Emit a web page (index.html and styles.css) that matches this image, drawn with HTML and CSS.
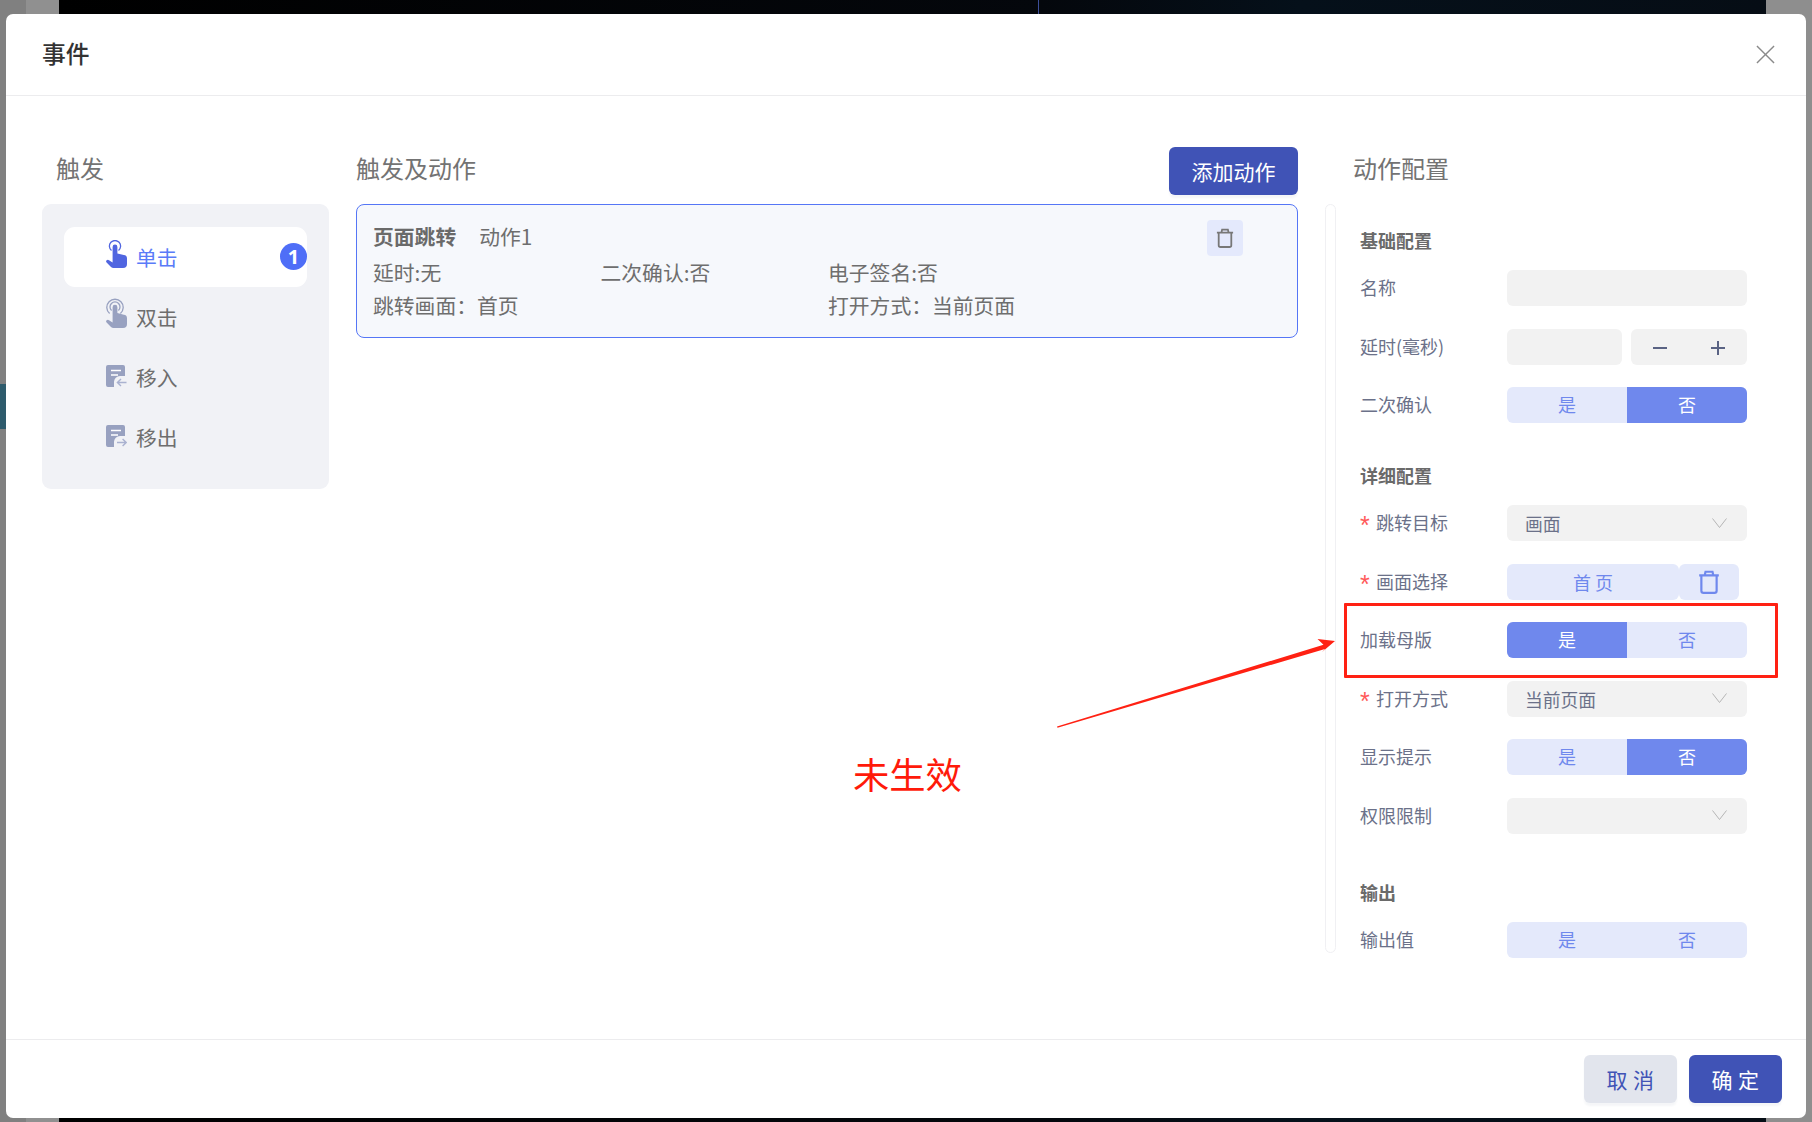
FILE: index.html
```html
<!DOCTYPE html>
<html lang="zh-CN">
<head>
<meta charset="utf-8">
<title>事件</title>
<link rel="stylesheet" href="styles.css">
</head>
<body>
<svg class="defs" width="0" height="0" aria-hidden="true">
  <defs>
    <symbol id="hand" viewBox="0 0 21 28">
      <path d="M5.500 10.500a5.600 5.600 0 1 1 7 0" fill="none" stroke="currentColor" stroke-width="1.300"/>
      <path fill="currentColor" d="M6.600 7a2.400 2.400 0 0 1 4.800 0V13.500l6.400 1.400a3.600 3.600 0 0 1 3.200 3.600V24a4 4 0 0 1-4 4H7.500a3.400 3.400 0 0 1-2.500-1.100L.6 22.600a1.700 1.700 0 0 1 2.400-2.400l3.600 2.200Z"/>
    </symbol>
    <symbol id="hand2" viewBox="0 0 21 30">
      <path d="M3.600 15.600a8.200 8.200 0 1 1 10.800 0" fill="none" stroke="currentColor" stroke-width="1.300"/>
      <path d="M5.600 12.600a5 5 0 1 1 6.800 0" fill="none" stroke="currentColor" stroke-width="1.300"/>
      <path fill="currentColor" d="M6.600 9.200a2.400 2.400 0 0 1 4.800 0V15l6.400 1.700a3.600 3.600 0 0 1 3.200 3.600V26a4 4 0 0 1-4 4H7.500a3.400 3.400 0 0 1-2.500-1.100L.6 24.600a1.700 1.700 0 0 1 2.400-2.400l3.600 2.200Z"/>
    </symbol>
    <symbol id="doc-in" viewBox="0 0 21 22">
      <path fill="currentColor" d="M2 0h15a2 2 0 0 1 2 2v9h-5a6 6 0 0 0-6 6v5H2a2 2 0 0 1-2-2V2a2 2 0 0 1 2-2Z"/>
      <path d="M5 5.500h10M5 10h7" stroke="#fff" stroke-width="1.600" fill="none"/>
      <path d="M20.500 17.500h-9M15 14l-3.600 3.500L15 21" stroke="#aab2d0" stroke-width="1.400" fill="none"/>
    </symbol>
    <symbol id="doc-out" viewBox="0 0 21 22">
      <path fill="currentColor" d="M2 0h15a2 2 0 0 1 2 2v9h-5a6 6 0 0 0-6 6v5H2a2 2 0 0 1-2-2V2a2 2 0 0 1 2-2Z"/>
      <path d="M5 5.500h10M5 10h7" stroke="#fff" stroke-width="1.600" fill="none"/>
      <path d="M11 17.500h9M16.600 14l3.600 3.500-3.600 3.500" stroke="#aab2d0" stroke-width="1.400" fill="none"/>
    </symbol>
    <symbol id="trash" viewBox="0 0 20 22">
      <path d="M1 5h18M6 5 6.800 1.600h6.400L14 5M3 5v14a2 2 0 0 0 2 2h10a2 2 0 0 0 2-2V5" fill="none" stroke="currentColor" stroke-width="2"/>
    </symbol>
    <symbol id="chevron" viewBox="0 0 15 10">
      <path d="M.5.5 7.500 9.500 14.500.5" fill="none" stroke="currentColor" stroke-width="1"/>
    </symbol>
  </defs>
</svg>

<div class="modal">
  <header class="modal-header">
    <h1 class="modal-title">事件</h1>
    <svg class="close-icon" viewBox="0 0 20 20"><path d="M1 1l18 18M19 1 1 19" fill="none" stroke="currentColor" stroke-width="1.500"/></svg>
  </header>

  <main class="modal-body">
    <section class="col">
      <div class="col-head"><h2 class="col-title col-title--trigger">触发</h2></div>
      <nav class="trigger-panel">
        <div class="trigger trigger--active">
          <svg class="trigger-icon trigger-icon--hand"><use href="#hand"/></svg>
          <span>单击</span>
          <span class="badge">1</span>
        </div>
        <div class="trigger">
          <svg class="trigger-icon trigger-icon--hand2"><use href="#hand2"/></svg>
          <span>双击</span>
        </div>
        <div class="trigger">
          <svg class="trigger-icon trigger-icon--doc"><use href="#doc-in"/></svg>
          <span>移入</span>
        </div>
        <div class="trigger">
          <svg class="trigger-icon trigger-icon--doc"><use href="#doc-out"/></svg>
          <span>移出</span>
        </div>
      </nav>
    </section>

    <section class="col">
      <div class="col-head col-head--split">
        <h2 class="col-title">触发及动作</h2>
        <button class="btn btn--primary btn--add">添加动作</button>
      </div>
      <article class="action-card">
        <div class="action-head">
          <strong class="action-type">页面跳转</strong>
          <span>动作1</span>
        </div>
        <div class="action-grid">
          <span>延时:无</span><span>二次确认:否</span><span>电子签名:否</span>
          <span>跳转画面：首页</span><span></span><span class="action-wide">打开方式：当前页面</span>
        </div>
        <div class="action-delete"><svg class="action-delete-icon"><use href="#trash"/></svg></div>
      </article>
    </section>

    <section class="col col--config">
      <div class="col-head"><h2 class="col-title col-title--config">动作配置</h2></div>
      <div class="config">
        <div class="rail"></div>
        <div class="form">
          <div class="group">
            <h3 class="group-title">基础配置</h3>
            <div class="field"><label class="field-label">名称</label><div class="input"></div></div>
            <div class="field"><label class="field-label">延时(毫秒)</label>
              <div class="delay">
                <div class="input input--delay"></div>
                <div class="stepper"><span class="step-minus"></span><span class="step-plus"></span></div>
              </div>
            </div>
            <div class="field"><label class="field-label">二次确认</label>
              <div class="toggle"><span class="seg">是</span><span class="seg seg--on">否</span></div>
            </div>
          </div>

          <div class="group group--detail">
            <h3 class="group-title">详细配置</h3>
            <div class="field"><label class="field-label"><i class="req">*</i>跳转目标</label>
              <div class="select"><span>画面</span><svg class="chevron"><use href="#chevron"/></svg></div>
            </div>
            <div class="field"><label class="field-label"><i class="req">*</i>画面选择</label>
              <div class="page-pick">
                <span class="page-name">首 页</span>
                <span class="page-del"><svg class="page-del-icon"><use href="#trash"/></svg></span>
              </div>
            </div>
            <div class="field"><label class="field-label">加载母版</label>
              <div class="toggle"><span class="seg seg--on">是</span><span class="seg">否</span></div>
            </div>
            <div class="field"><label class="field-label"><i class="req">*</i>打开方式</label>
              <div class="select"><span>当前页面</span><svg class="chevron"><use href="#chevron"/></svg></div>
            </div>
            <div class="field"><label class="field-label">显示提示</label>
              <div class="toggle"><span class="seg">是</span><span class="seg seg--on">否</span></div>
            </div>
            <div class="field"><label class="field-label">权限限制</label>
              <div class="select"><span></span><svg class="chevron"><use href="#chevron"/></svg></div>
            </div>
          </div>

          <div class="group group--output">
            <h3 class="group-title">输出</h3>
            <div class="field"><label class="field-label">输出值</label>
              <div class="toggle"><span class="seg">是</span><span class="seg">否</span></div>
            </div>
          </div>
        </div>
      </div>
    </section>
  </main>

  <footer class="modal-footer">
    <button class="btn btn--ghost btn--foot">取 消</button>
    <button class="btn btn--primary btn--foot">确 定</button>
  </footer>
</div>

<div class="mark-box"></div>
<svg class="mark-arrow" viewBox="0 0 1812 1122" aria-hidden="true">
  <path fill="#ff2113" d="M1057 726.600 1323.500 644.700 1317.500 639 1335 641 1321.500 652.500 1325 649 1057.500 727.800Z"/>
</svg>
<div class="mark-text">未生效</div>
</body>
</html>
```
FILE: styles.css
```css
* { box-sizing: border-box; }
html, body { margin: 0; width: 1812px; height: 1122px; overflow: hidden; }
body {
  font-family: "Noto Sans CJK SC", "Noto Sans", "Liberation Sans", sans-serif;
  background:
    linear-gradient(#2e5b6c, #2e5b6c) 0 384px / 6px 45px no-repeat,
    linear-gradient(#3d4f9a, #3d4f9a) 1038px 0 / 1px 14px no-repeat,
    linear-gradient(90deg, #808080 0, #808080 26px, #909090 26px, #909090 59px, #000 59px, #04070c 1040px, #05101a 1300px, #060d15 1766px, #8e8e8e 1766px);
  padding: 14px 6px 4px;
}
.defs { position: absolute; }

.modal {
  height: 1104px;
  background: #fff;
  border-radius: 7px;
  display: flex;
  flex-direction: column;
}
.modal-header {
  height: 82px;
  flex: none;
  border-bottom: 1px solid #ececee;
  padding: 0 31px 0 36px;
  display: flex;
  align-items: center;
  justify-content: space-between;
}
.modal-title { margin: 0 0 3px; font-size: 23.800px; font-weight: 500; color: #333; line-height: 32px; }
.close-icon { width: 19px; height: 19px; color: #8a8a8a; margin-bottom: 1px; }

.modal-body {
  flex: 1;
  display: grid;
  grid-template-columns: 287px 942px 1fr;
  column-gap: 27px;
  padding: 51px 0 0 36px;
}
.col-head { height: 48px; margin-bottom: 9px; display: flex; align-items: center; }
.col-head--split { justify-content: space-between; }
.col-title { margin: 0 0 7px; font-size: 24px; font-weight: 400; color: #737373; line-height: 40px; }
.col-title--trigger { padding-left: 14px; }
.col-title--config { padding-left: 28px; }

.trigger-panel {
  height: 285px;
  background: #f1f2f6;
  border-radius: 9px;
  padding: 23px 22px;
}
.trigger {
  height: 60px;
  border-radius: 11px;
  position: relative;
  display: flex;
  align-items: center;
  padding-left: 42px;
  font-size: 20.800px;
  color: #6e6e6e;
}
.trigger > span:not(.badge) { position: absolute; left: 72px; top: 15px; line-height: 30px; }
.trigger--active { background: #fff; color: #5a7bf8; }
.trigger-icon { position: absolute; left: 42px; color: #98a1c0; }
.trigger-icon--hand { width: 21px; height: 28px; top: 13px; color: #5065e0; }
.trigger-icon--hand2 { width: 21px; height: 30px; top: 11px; }
.trigger-icon--doc { width: 21px; height: 22px; top: 18px; }
.badge {
  position: absolute;
  right: 0;
  top: 16px;
  width: 27px;
  height: 27px;
  border-radius: 50%;
  background: #4f6ef7;
  color: #fff;
  font-size: 20px;
  font-weight: 700;
  line-height: 27px;
  text-align: center;
  font-family: "Noto Sans", sans-serif;
}

.btn {
  border: 0;
  padding: 0;
  font-family: inherit;
  border-radius: 6px;
  height: 48px;
  font-size: 21px;
  line-height: 48px;
  box-shadow: 0 3px 2px rgba(60, 70, 120, .05);
}
.btn--primary { background: #4053b6; color: #fff; }
.btn--ghost { background: #e2e5ed; color: #4053b6; }
.btn--add { width: 129px; }
.btn--foot { width: 93px; letter-spacing: .5px; }

.action-card {
  height: 134px;
  background: #f6f8fc;
  border: 1px solid #5576f6;
  border-radius: 8px;
  padding: 15px 16px;
  position: relative;
  font-size: 20.800px;
  color: #6e6e6e;
  line-height: 33px;
}
.action-head { display: flex; gap: 23px; height: 33px; }
.action-type { font-weight: 700; color: #6a6a6a; }
.action-grid {
  display: grid;
  grid-template-columns: 227.500px 227.500px 1fr;
  margin-top: 3px;
}
.action-delete {
  position: absolute;
  left: 850px;
  top: 15px;
  width: 36px;
  height: 36px;
  background: #e4e9fc;
  border-radius: 4px;
  display: flex;
  align-items: center;
  justify-content: center;
}
.action-delete-icon { width: 18px; height: 20px; color: #777; }

.config { display: flex; height: 749px; }
.rail {
  width: 11px;
  flex: none;
  border: 1px solid #f0f0f3;
  border-radius: 6px;
}
.form { padding: 24px 0 0 24px; flex: 1; }
.group { display: flex; flex-direction: column; gap: 22.500px; }
.group--detail { margin-top: 40px; }
.group--output { margin-top: 46.500px; }
.group-title {
  margin: 0 0 -6.500px;
  height: 26px;
  font-size: 18px;
  font-weight: 700;
  line-height: 24.500px;
  color: #6a6a6a;
}
.field { display: flex; align-items: center; height: 36px; }
.field-label {
  width: 147px;
  flex: none;
  font-size: 18px;
  line-height: 26px;
  padding-bottom: 2px;
  color: #6b7189;
  display: flex;
  align-items: center;
}
.req {
  font-style: normal;
  color: #ff5a5a;
  width: 16px;
  font-size: 25px;
  font-family: "Liberation Sans", sans-serif;
  line-height: 26px;
  transform: translateY(3px);
}
.input, .select, .stepper { background: #f2f2f2; border-radius: 6px; height: 36px; }
.input { width: 240px; }
.delay { display: flex; justify-content: space-between; width: 240px; }
.input--delay { width: 115px; }
.stepper { width: 116px; position: relative; }
.step-minus, .step-plus { position: absolute; background: #5a6384; height: 2px; width: 14px; top: 18px; }
.step-minus { left: 22px; }
.step-plus { left: 80px; }
.step-plus::after { content: ""; position: absolute; left: 6px; top: -6px; width: 2px; height: 14px; background: #5a6384; }
.select {
  width: 240px;
  padding: 0 20px 0 18px;
  display: flex;
  align-items: center;
  justify-content: space-between;
  font-size: 17.800px;
  color: #6b7189;
  line-height: 36px;
}
.chevron { width: 15px; height: 10px; color: #b5b5b5; margin-top: -1px; }
.toggle { width: 240px; height: 36px; display: flex; border-radius: 6px; overflow: hidden; background: #e4e9fb; }
.seg { flex: 1; text-align: center; font-size: 18px; line-height: 35px; color: #6f88ed; }
.seg--on { background: #6f88ed; color: #fff; }
.page-pick { display: flex; }
.page-name {
  width: 172px;
  height: 36px;
  background: #e4e9fb;
  border-radius: 6px;
  text-align: center;
  font-size: 18px;
  line-height: 36px;
  color: #6f88ed;
}
.page-del {
  width: 60px;
  height: 36px;
  background: #e4e9fb;
  border-radius: 6px;
  display: flex;
  align-items: center;
  justify-content: center;
}
.page-del-icon { width: 22px; height: 24px; color: #6f88ed; }

.modal-footer {
  height: 79px;
  flex: none;
  border-top: 1px solid #ececee;
  display: flex;
  justify-content: flex-end;
  gap: 12px;
  padding: 15px 24px 0 0;
}

.mark-box {
  position: absolute;
  left: 1344px;
  top: 603px;
  width: 434px;
  height: 75px;
  border: 3px solid #ff2113;
  border-radius: 1px;
}
.mark-arrow { position: absolute; left: 0; top: 0; width: 1812px; height: 1122px; pointer-events: none; }
.mark-text {
  position: absolute;
  left: 853px;
  top: 746px;
  font-size: 36.300px;
  line-height: 54px;
  color: #ff1a0a;
}
```
